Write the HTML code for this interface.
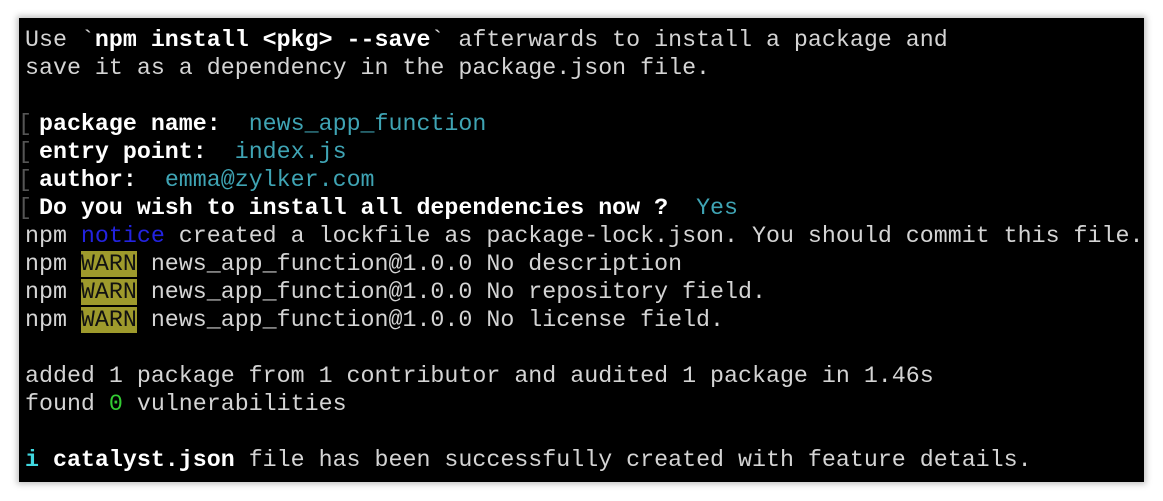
<!DOCTYPE html>
<html><head><style>
html,body{margin:0;padding:0;background:#fff;width:1163px;height:501px;overflow:hidden}
.term{position:absolute;left:19px;top:18px;width:1125px;height:464px;background:#000;box-shadow:0 0 6px 2px rgba(0,0,0,0.25)}
pre{margin:0;position:absolute;left:6px;top:8px;font-family:"Liberation Mono","Courier New",monospace;font-size:23.3px;line-height:28px;color:#d4d4d4;white-space:pre}
b{color:#fff}
.c{color:#3fa4b4}
.n{color:#2323e0}
.w{background:#9e9a2c;color:#111}
.g{color:#33cc33}
.i{color:#40d8e0;font-weight:bold}
.br{color:#555;display:inline-block;width:14px;margin-left:-7px;margin-right:-7px}
</style></head><body>
<div class="term"><pre>Use `<b>npm install &lt;pkg&gt; --save</b>` afterwards to install a package and
save it as a dependency in the package.json file.

<span class="br">[</span> <b>package name:</b>  <span class="c">news_app_function</span>
<span class="br">[</span> <b>entry point:</b>  <span class="c">index.js</span>
<span class="br">[</span> <b>author:</b>  <span class="c">emma@zylker.com</span>
<span class="br">[</span> <b>Do you wish to install all dependencies now ?</b>  <span class="c">Yes</span>
npm <span class="n">notice</span> created a lockfile as package-lock.json. You should commit this file.
npm <span class="w">WARN</span> news_app_function@1.0.0 No description
npm <span class="w">WARN</span> news_app_function@1.0.0 No repository field.
npm <span class="w">WARN</span> news_app_function@1.0.0 No license field.

added 1 package from 1 contributor and audited 1 package in 1.46s
found <span class="g">0</span> vulnerabilities

<span class="i">i</span> <b>catalyst.json</b> file has been successfully created with feature details.</pre></div>
</body></html>
